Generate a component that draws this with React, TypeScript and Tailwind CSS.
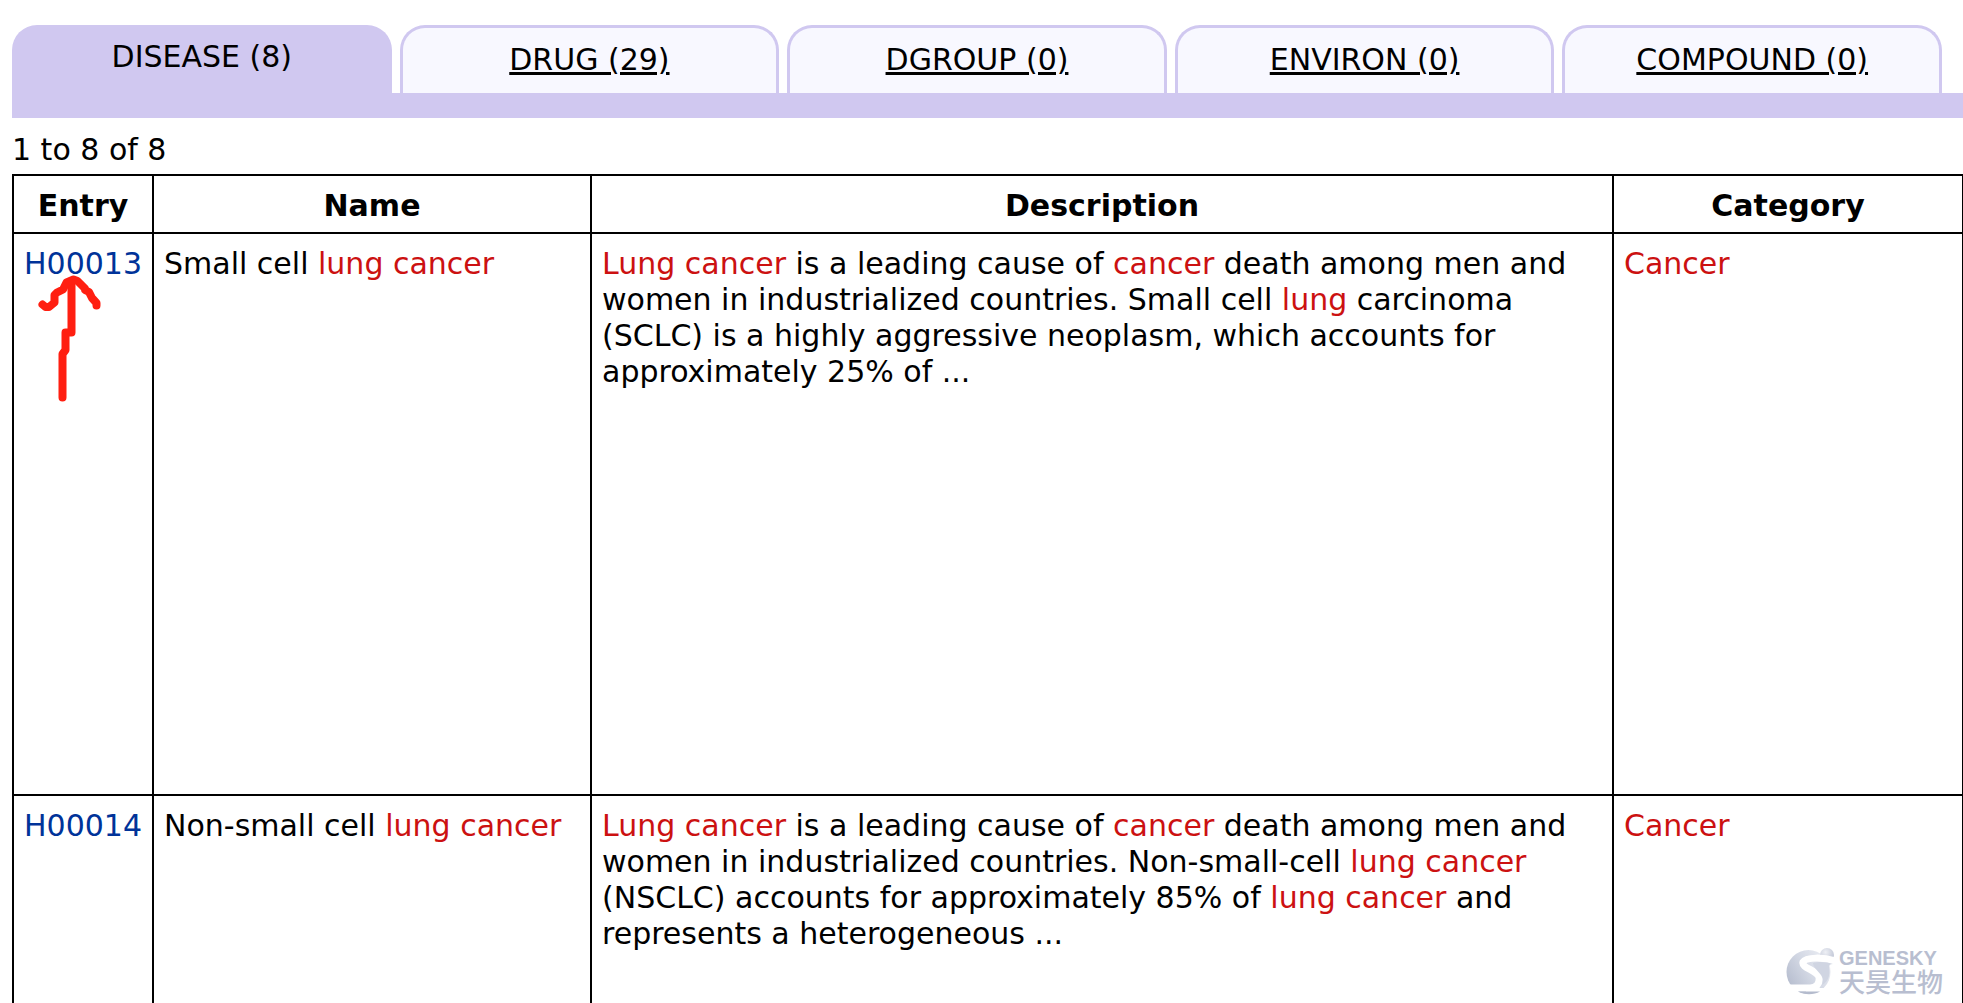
import React from "react";

const tabs = [
  { label: "DISEASE (8)", active: true },
  { label: "DRUG (29)" },
  { label: "DGROUP (0)" },
  { label: "ENVIRON (0)" },
  { label: "COMPOUND (0)" },
];

const Hit: React.FC<{ children: React.ReactNode }> = ({ children }) => (
  <span className="text-[#cc1111]">{children}</span>
);

const rows = [
  {
    entry: "H00013",
    name: (
      <>
        Small cell <Hit>lung cancer</Hit>
      </>
    ),
    description: (
      <>
        <Hit>Lung cancer</Hit> is a leading cause of <Hit>cancer</Hit> death
        among men and
        <br />
        women in industrialized countries. Small cell <Hit>lung</Hit> carcinoma
        <br />
        (SCLC) is a highly aggressive neoplasm, which accounts for
        <br />
        approximately 25% of ...
      </>
    ),
    category: <Hit>Cancer</Hit>,
  },
  {
    entry: "H00014",
    name: (
      <>
        Non-small cell <Hit>lung cancer</Hit>
      </>
    ),
    description: (
      <>
        <Hit>Lung cancer</Hit> is a leading cause of <Hit>cancer</Hit> death
        among men and
        <br />
        women in industrialized countries. Non-small-cell <Hit>lung cancer</Hit>
        <br />
        (NSCLC) accounts for approximately 85% of <Hit>lung cancer</Hit> and
        <br />
        represents a heterogeneous ...
      </>
    ),
    category: <Hit>Cancer</Hit>,
  },
];

const Arrow = () => (
  <svg
    className="absolute left-[38px] top-[274px]"
    width="66"
    height="130"
    viewBox="38 274 66 130"
    fill="none"
    stroke="#ff1f11"
    strokeWidth="8"
    strokeLinecap="round"
    strokeLinejoin="round"
  >
    <path d="M62.5 397.5V354L65.500 350V332.500H71.500V281" />
    <path d="M42.500 304.500L45.500 307H49L54.500 302.500V295L57 292.500L63 289.500L66.500 282.500L73.500 279.500L77.500 281L85 288.500V290L89 292L92 298L96.500 303V305.500" />
  </svg>
);

const Logo = () => (
  <div className="absolute bottom-1.5 right-5 flex items-center gap-1 text-[#b8bed0]">
    <svg width="49" height="50" viewBox="0 0 49 50">
      <defs>
        <linearGradient id="globe" x1="0" y1="0.8" x2="1" y2="0.2">
          <stop offset="0" stopColor="#b4bbcd" />
          <stop offset="0.5" stopColor="#d3d8e4" />
          <stop offset="1" stopColor="#eceef4" />
        </linearGradient>
        <radialGradient id="moon" cx="0.4" cy="0.3" r="0.8">
          <stop offset="0" stopColor="#eef0f5" />
          <stop offset="1" stopColor="#b8bed0" />
        </radialGradient>
      </defs>
      <circle cx="22.5" cy="25" r="22" fill="url(#globe)" />
      <circle cx="41" cy="8" r="7" fill="url(#moon)" />
      <path
        d="M49 14C38 10 20 10 17 15C15 21 31 23 33 30C34 37 30 41 24 41H0"
        fill="none"
        stroke="#fff"
        strokeWidth="7"
      />
      <path d="M20 41H44V50H20Z" fill="#fff" />
      <path d="M12 44.500H34C28 48 18 48 12 44.500Z" fill="#b4bbcd" />
      <path d="M27 16C33 14 42 15 47 17C44 17 43 18 43 20C45 29 41 36 36 38C41 28 27 23 27 16Z" fill="#d0d5e2" />
    </svg>
    <div className="flex flex-col">
      <span className="font-['Liberation_Sans',sans-serif] text-[20px] font-bold leading-[22px]">
        GENESKY
      </span>
      <span className="font-['Liberation_Sans','Noto_Sans_CJK_SC',sans-serif] text-[26px] font-medium leading-[28px]">
        天昊生物
      </span>
    </div>
  </div>
);

export default function App() {
  return (
    <div className="relative h-screen overflow-hidden bg-white pl-3 pt-[25px] font-['Verdana','DejaVu_Sans',sans-serif] text-[30px] leading-[36px] text-black">
      {/* Tabs */}
      <nav className="grid grid-cols-5 gap-2 border-b-[25px] border-[#d0c8f0] pr-[21px]">
        {tabs.map((tab) =>
          tab.active ? (
            <a
              key={tab.label}
              href="#"
              aria-current="page"
              className="h-[68px] rounded-t-[25px] bg-[#d0c8f0] pt-[14px] text-center"
            >
              {tab.label}
            </a>
          ) : (
            <a
              key={tab.label}
              href="#"
              className="h-[68px] rounded-t-[25px] border-[3px] border-b-0 border-[#d0c8f0] bg-[#f8f8ff] pt-[14px] text-center underline decoration-[3px] underline-offset-[2px]"
            >
              {tab.label}
            </a>
          )
        )}
      </nav>

      <p className="pb-[6px] pt-[14px]">1 to 8 of 8</p>

      {/* Results */}
      <div className="-mr-px">
        <table className="w-full table-fixed border-collapse">
          <colgroup>
            <col className="w-[140px]" />
            <col className="w-[438px]" />
            <col />
            <col className="w-[350px]" />
          </colgroup>
          <thead>
            <tr>
              {["Entry", "Name", "Description", "Category"].map((title) => (
                <th
                  key={title}
                  className="border-2 border-black px-2.5 pb-2 pt-3 font-bold"
                >
                  {title}
                </th>
              ))}
            </tr>
          </thead>
          <tbody>
            {rows.map((row) => (
              <tr key={row.entry} className="h-[562px] align-top">
                <td className="border-2 border-black px-2.5 pb-2 pt-3">
                  <a href="#" className="text-[#003399]">
                    {row.entry}
                  </a>
                </td>
                <td className="border-2 border-black px-2.5 pb-2 pt-3">
                  {row.name}
                </td>
                <td className="whitespace-nowrap border-2 border-black px-2.5 pb-2 pt-3">
                  {row.description}
                </td>
                <td className="border-2 border-black px-2.5 pb-2 pt-3">
                  {row.category}
                </td>
              </tr>
            ))}
          </tbody>
        </table>
      </div>

      <Arrow />
      <Logo />
    </div>
  );
}
